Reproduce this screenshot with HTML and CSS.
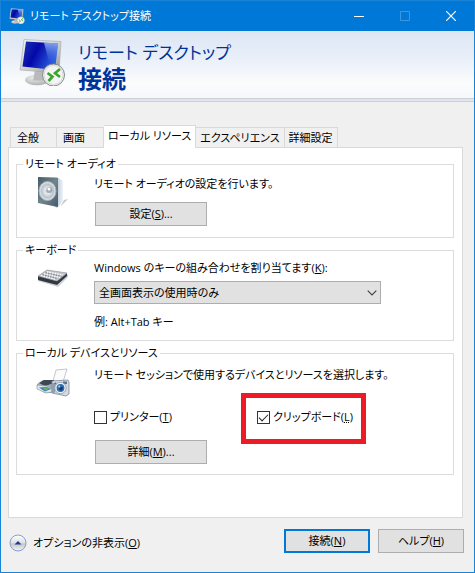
FILE: index.html
```html
<!DOCTYPE html>
<html lang="ja">
<head>
    <meta charset="UTF-8">
    <meta name="viewport" content="width=device-width, initial-scale=1.0">
    <title>リモート デスクトップ接続</title>
    <link rel="stylesheet" href="styles.css">
</head>
<body>
<div class="window">
    <!-- タイトルバー -->
    <div class="titlebar">
        <svg class="title-icon" viewBox="0 0 48 48" aria-hidden="true"><use href="#rdp"/></svg>
        <span class="title-text">リモート デスクトップ接続</span>
        <button type="button" class="win-btn" aria-label="最小化">
            <svg width="10" height="10" viewBox="0 0 10 10"><path d="M0 5.5h10" stroke="#fff"/></svg>
        </button>
        <button type="button" class="win-btn" aria-label="最大化" disabled>
            <svg width="10" height="10" viewBox="0 0 10 10"><path d="M.5.5h9v9h-9z" fill="none" stroke="#3a97e2"/></svg>
        </button>
        <button type="button" class="win-btn" aria-label="閉じる">
            <svg width="10" height="10" viewBox="0 0 10 10"><path d="M0 0l10 10M10 0L0 10" stroke="#fff" stroke-width="1.2"/></svg>
        </button>
    </div>

    <!-- ヘッダー -->
    <div class="header">
        <svg class="header-icon" viewBox="0 0 48 48" aria-hidden="true">
            <defs>
                <linearGradient id="screen" x1="0" y1="0" x2="1" y2="0.4">
                    <stop offset="0" stop-color="#1a35b5"/>
                    <stop offset="0.45" stop-color="#0508a8"/>
                    <stop offset="1" stop-color="#2a5fe0"/>
                </linearGradient>
                <linearGradient id="shine" x1="0" y1="0" x2="0" y2="1">
                    <stop offset="0" stop-color="#a8c8ff"/>
                    <stop offset="1" stop-color="#1c3fd0" stop-opacity="0.2"/>
                </linearGradient>
                <linearGradient id="frame" x1="0" y1="0" x2="1" y2="1">
                    <stop offset="0" stop-color="#f4f4f2"/>
                    <stop offset="0.6" stop-color="#c9cac8"/>
                    <stop offset="1" stop-color="#8b8d8c"/>
                </linearGradient>
                <radialGradient id="base" cx="0.4" cy="0.3" r="0.8">
                    <stop offset="0" stop-color="#eeeeee"/>
                    <stop offset="1" stop-color="#a9aaac"/>
                </radialGradient>
                <g id="rdp">
                    <ellipse cx="19" cy="42" rx="12" ry="5.2" fill="url(#base)"/>
                    <path d="M17 32l9 1.5-1 9H15z" fill="#b9babb"/>
                    <path d="M6 1.5L43 3.500 41 35 2 32z" fill="url(#frame)" stroke="#a6a8a8" stroke-width="0.6"/>
                    <path d="M8 3.500L40 5.500 37 32 4.500 28.500z" fill="url(#screen)"/>
                    <path d="M26 4.600L40 5.500 38 22 32 28z" fill="url(#shine)" opacity="0.750"/>
                    <circle cx="35.500" cy="37" r="11" fill="#f3f4f3" stroke="#85888a"/>
                    <circle cx="35.500" cy="37" r="9.500" fill="none" stroke="#d6d8d8"/>
                    <path d="M29.500 35l5 3.700-4 4.300M42 31l-5 4.200 5 3.800" fill="none" stroke="#3aa52b" stroke-width="2.600"/>
                </g>
            </defs>
            <use href="#rdp"/>
        </svg>
        <h1 class="header-title">リモート デスクトップ<strong>接続</strong></h1>
    </div>

    <!-- タブ -->
    <div class="tabs" role="tablist">
        <button type="button" class="tab" role="tab">全般</button>
        <button type="button" class="tab" role="tab">画面</button>
        <button type="button" class="tab active" role="tab" aria-selected="true">ローカル リソース</button>
        <button type="button" class="tab" role="tab">エクスペリエンス</button>
        <button type="button" class="tab" role="tab">詳細設定</button>
    </div>

    <div class="pane" role="tabpanel">
        <fieldset class="group audio">
            <legend>リモート オーディオ</legend>
            <div class="group-row">
                <svg class="group-icon" viewBox="0 0 34 34" aria-hidden="true">
                    <defs>
                        <linearGradient id="box" x1="0" y1="0" x2="1" y2="1">
                            <stop offset="0" stop-color="#455c69"/>
                            <stop offset="0.5" stop-color="#71858f"/>
                            <stop offset="1" stop-color="#455b68"/>
                        </linearGradient>
                        <linearGradient id="side" x1="0" y1="0" x2="1" y2="0">
                            <stop offset="0.7" stop-color="#b4c4d4"/>
                            <stop offset="1" stop-color="#eef3f8"/>
                        </linearGradient>
                        <radialGradient id="cone">
                            <stop offset="0" stop-color="#9aa6ae"/>
                            <stop offset="0.3" stop-color="#e8ecef"/>
                            <stop offset="0.7" stop-color="#b9c3ca"/>
                            <stop offset="1" stop-color="#eceff1"/>
                        </radialGradient>
                    </defs>
                    <path d="M24 31l8-8-4 1z" fill="#c8c8c8"/>
                    <path d="M2 1h19l6 4v20l-6 7-3-2z" fill="url(#side)"/>
                    <path d="M2 1l20 1v29L2 27z" fill="url(#box)"/>
                    <ellipse cx="11.500" cy="15" rx="8.500" ry="9.500" fill="url(#cone)" stroke="#a3afb7"/>
                    <circle cx="13.500" cy="14" r="3" fill="#a0abb3"/>
                    <circle cx="13" cy="13" r="1.500" fill="#fff"/>
                </svg>
                <div class="group-body">
                    <p>リモート オーディオの設定を行います。</p>
                    <button type="button" class="btn wide">設定(<u>S</u>)...</button>
                </div>
            </div>
        </fieldset>

        <fieldset class="group keyboard">
            <legend>キーボード</legend>
            <div class="group-row">
                <svg class="group-icon" viewBox="0 0 34 34" aria-hidden="true">
                    <path d="M2 17l19 8 11-11v3L22 27 2 21z" fill="#aeb4bc" opacity="0.600"/>
                    <path d="M2 16l19 5 10-8v3L21 25 2 20z" fill="#343842"/>
                    <path d="M2 16l9-6 20 3-10 8z" fill="#c3c7cb" stroke="#858a91" stroke-width="0.600"/>
                    <path d="M5 15.500l15 4M8 13.700l16 3.800M11 11.800l16 3.200" stroke="#fff" stroke-width="1.200" stroke-dasharray="1.600 1"/>
                    <path d="M6.500 14.600l15 4M9.500 12.700l16 3.600" stroke="#6a7078" stroke-width="0.800" stroke-dasharray="1.600 1"/>
                </svg>
                <div class="group-body">
                    <label for="keys">Windows のキーの組み合わせを割り当てます(<u>K</u>):</label>
                    <div class="select-wrap">
                        <select id="keys">
                            <option>全画面表示の使用時のみ</option>
                        </select>
                        <svg class="arrow" width="10" height="6" viewBox="0 0 10 6" aria-hidden="true"><path d="M.7.700L5 5 9.300.700" fill="none" stroke="#444" stroke-width="1.200"/></svg>
                    </div>
                    <p class="example">例: Alt+Tab キー</p>
                </div>
            </div>
        </fieldset>

        <fieldset class="group devices">
            <legend>ローカル デバイスとリソース</legend>
            <div class="group-row">
                <svg class="group-icon" viewBox="0 0 34 34" aria-hidden="true">
                    <path d="M17 14l3-11 11-1-4 13z" fill="#fbfbfc" stroke="#b5b9bf" stroke-width="0.800"/>
                    <path d="M1 17l6-4h11v13H9l-8-5z" fill="#a1aeb9"/>
                    <path d="M3 16l5-3h10v3l-9 3z" fill="#3e4852"/>
                    <path d="M1 18l10 1 5 3v3l-6 1-9-4z" fill="#dfe5ea" stroke="#7f8b95" stroke-width="0.600"/>
                    <path d="M3 20.500l8-.5 4 2-6 2.500z" fill="#3d7fb9"/>
                    <path d="M7 21l4-.5 2 1.500-4 1.500z" fill="#69b35c"/>
                    <path d="M16 14l16-1 1 2v12l-3 2-14-3z" fill="#d5dbe2" stroke="#7b8795" stroke-width="0.800"/>
                    <path d="M16 16h3v10l-3-.500z" fill="#929eaa"/>
                    <path d="M27 14.500h4v2.500h-4z" fill="#5d7189"/>
                    <circle cx="24.500" cy="21" r="5.700" fill="#eef1f4" stroke="#8c98a5" stroke-width="0.800"/>
                    <circle cx="24.500" cy="21" r="3.900" fill="#2d6cae"/>
                    <circle cx="25" cy="21.500" r="1.900" fill="#123b70"/>
                    <circle cx="23.300" cy="19.600" r="1.100" fill="#a6d2f5"/>
                    <circle cx="19.500" cy="16.500" r="0.900" fill="#2d6cae"/>
                </svg>
                <div class="group-body">
                    <p>リモート セッションで使用するデバイスとリソースを選択します。</p>
                    <div class="checks">
                        <label class="check" for="printer"><input type="checkbox" id="printer">プリンター(<u>T</u>)</label>
                        <label class="check marked" for="clipboard"><input type="checkbox" id="clipboard" checked>クリップボード(<u class="dotted">L</u>)</label>
                    </div>
                    <button type="button" class="btn wide">詳細(<u>M</u>)...</button>
                </div>
            </div>
        </fieldset>
    </div>

    <!-- 下部のボタン -->
    <div class="footer">
        <button type="button" class="options">
            <svg width="18" height="18" viewBox="0 0 18 18" aria-hidden="true">
                <defs>
                    <linearGradient id="round" x1="0" y1="0" x2="0" y2="1">
                        <stop offset="0" stop-color="#fff"/>
                        <stop offset="0.500" stop-color="#dde0e0"/>
                        <stop offset="0.550" stop-color="#c3c9c8"/>
                        <stop offset="1" stop-color="#f2f5f4"/>
                    </linearGradient>
                </defs>
                <circle cx="9" cy="9" r="8" fill="url(#round)" stroke="#8c9bd6"/>
                <path d="M5.500 10.500h7L9 7z" fill="#1f3a93"/>
            </svg>
            <span>オプションの非表示(<u>O</u>)</span>
        </button>
        <button type="button" class="btn primary">接続(<u>N</u>)</button>
        <button type="button" class="btn">ヘルプ(<u>H</u>)</button>
    </div>
</div>
</body>
</html>
```

FILE: styles.css
```css
* {
    box-sizing: border-box;
}
body {
    margin: 0;
    font-family: "Open Sans", "Noto Sans CJK JP", sans-serif;
    font-size: 11px;
    line-height: 16px;
    font-feature-settings: "palt";
    color: #000;
    background-color: #f0f0f0;
}
button, select, input {
    font: inherit;
    font-feature-settings: inherit;
    color: inherit;
}
p {
    margin: 0;
}
.window {
    display: flex;
    flex-direction: column;
    min-height: 100vh;
    border: 1px solid #1883d7;
}

/* タイトルバー */
.titlebar {
    display: flex;
    align-items: center;
    height: 30px;
    padding-left: 8px;
    color: #fff;
    background-color: #0078d7;
}
.title-icon {
    width: 16px;
    height: 16px;
    margin-right: 5px;
}
.title-text {
    flex: 1;
    white-space: nowrap;
}
.win-btn {
    display: flex;
    align-items: center;
    justify-content: center;
    width: 46px;
    height: 30px;
    padding: 0;
    border: none;
    background: none;
}

/* ヘッダー */
.header {
    display: flex;
    padding: 7px 17px 4px;
    height: 71px;
    background: linear-gradient(#dce6f2, #e9eff9 40%, #fbfcfc 78%, #f5f8fc);
    border-bottom: 4px double #cfcfcf;
}
.header-icon {
    width: 48px;
    height: 48px;
    margin-right: 12px;
}
.header-title {
    margin: 3px 0 0;
    font-size: 17px;
    line-height: 24px;
    font-weight: normal;
    color: #003399;
}
.header-title strong {
    display: block;
    font-size: 24px;
    line-height: 28px;
}

/* タブ */
.tabs {
    display: flex;
    align-items: flex-end;
    margin: 23px 12px 0 9px;
}
.tab {
    height: 20px;
    padding: 0 4px;
    border: 1px solid #d9d9d9;
    border-bottom: none;
    border-left: none;
    background-color: #f0f0f0;
    white-space: nowrap;
}
.tab:nth-child(-n+2) {
    width: 47px;
    padding-left: 6px;
    text-align: left;
}
.tab:first-child {
    border-left: 1px solid #d9d9d9;
}
.tab.active {
    position: relative;
    height: 23px;
    margin-bottom: -1px;
    padding-bottom: 3px;
    background-color: #fff;
}
.pane {
    margin: 0 11px 0 7px;
    padding: 8px 8px 42px 7px;
    border: 1px solid #d9d9d9;
    background-color: #fff;
}

/* グループ */
.group {
    min-width: 0;
    margin: 0 0 4px;
    padding: 4px 8px 10px 19px;
    border: 1px solid #dcdcdc;
}
.group:last-child {
    margin-bottom: 0;
}
.group legend {
    margin-left: -13px;
    padding: 0 2px;
}
.group-row {
    display: flex;
}
.group-icon {
    flex: none;
    width: 34px;
    height: 34px;
    margin-right: 24px;
}
.group-body {
    flex: 1;
    min-width: 0;
}
.audio {
    padding-bottom: 11px;
}
.audio .btn {
    margin-top: 10px;
}
.keyboard {
    padding-top: 2px;
}
.keyboard label {
    display: block;
}
.select-wrap {
    position: relative;
    max-width: 287px;
    margin: 5px 0 10px;
}
select {
    display: block;
    width: 100%;
    height: 23px;
    padding: 0 24px 0 4px;
    border: 1px solid #adadad;
    border-radius: 0;
    background-color: #e1e1e1;
    appearance: none;
}
.arrow {
    position: absolute;
    top: 9px;
    right: 4px;
    pointer-events: none;
}
.devices {
    padding-top: 6px;
}
.checks {
    display: grid;
    grid-template-columns: 163px 1fr;
    margin: 26px 0 15px;
}
.check {
    display: flex;
    align-items: center;
    justify-self: start;
    white-space: nowrap;
}
.check input {
    width: 13px;
    height: 13px;
    margin: 0 3px 0 0;
    border: 1px solid #333;
    background-color: #fff;
    appearance: none;
}
.check input:checked::before {
    content: "";
    display: block;
    width: 8px;
    height: 4px;
    margin: 2px 0 0 1px;
    border-left: 1px solid #222;
    border-bottom: 1px solid #222;
    transform: rotate(-45deg);
}
.marked {
    position: relative;
}
.marked::after {
    content: "";
    position: absolute;
    top: -16px;
    left: -16px;
    width: 115px;
    height: 41px;
    border: 5px solid #ed1c24;
    pointer-events: none;
}
.dotted {
    text-decoration-style: dotted;
}

/* ボタン */
.btn {
    width: 86px;
    height: 24px;
    padding: 0;
    border: 1px solid #adadad;
    background-color: #e1e1e1;
}
.btn.wide {
    display: block;
    width: 112px;
    margin-left: 1px;
}
.btn.primary {
    border: 2px solid #0078d7;
}
.footer {
    display: flex;
    gap: 8px;
    padding: 11px 10px 19px 8px;
}
.options {
    display: flex;
    align-items: center;
    gap: 6px;
    margin-right: auto;
    padding: 3px 0 0;
    border: none;
    background: none;
}
```
